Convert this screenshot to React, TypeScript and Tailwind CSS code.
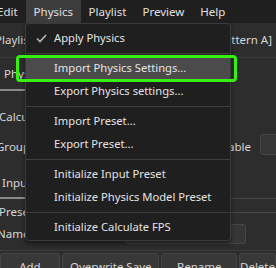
import React from 'react';

const MenuItem = ({ label, active = false, checked = false }: { label: string; active?: boolean; checked?: boolean }) => (
  <div className={`relative flex h-[23px] items-center pl-[28px] ${active ? 'bg-[#4b4b4b]' : ''}`}>
    {checked && (
      <svg className="absolute left-[10px] top-[7px]" width="11" height="9" viewBox="0 0 11 9" fill="none">
        <path d="M1 4.5 L4 7.5 L10 1" stroke="#b4b4b4" strokeWidth="1.6" />
      </svg>
    )}
    <span>{label}</span>
  </div>
);

const Separator = () => (
  <div className="flex h-[7px] items-center">
    <div className="h-px w-full bg-[#3e3e3e]" />
  </div>
);

export default function App() {
  return (
    <div className="relative h-[268px] w-[276px] overflow-hidden bg-[#2d2d2d] font-['Noto_Sans',sans-serif] text-[11.5px] text-[#d6d6d6]">
      {/* menu bar */}
      <div className="flex h-[23px] items-center bg-[#1f1f1f] text-[#e0e0e0]">
        <div className="-ml-[11px] flex h-full items-center px-2">Edit</div>
        <div className="flex h-full w-[55px] items-center bg-[#3c3c3c] px-2">Physics</div>
        <div className="flex h-full items-center px-2">Playlist</div>
        <div className="flex h-full items-center px-2">Preview</div>
        <div className="flex h-full items-center px-2">Help</div>
      </div>

      {/* toolbar */}
      <div className="flex h-[35px] items-center justify-between border-b border-[#3a3a3a] pr-[4px]">
        <span className="-ml-[5px]">Playlist</span>
        <span>[Physics Pattern A]</span>
      </div>

      {/* tab */}
      <div className="flex h-[33px] flex-col justify-between">
        <div className="flex flex-1 items-center pl-[4px]">Physics</div>
        <div className="h-[2px] w-[70px] bg-[#8a8a8a]" />
      </div>

      {/* settings */}
      <div className="mt-[13px] flex h-[26px] items-center">
        <span className="-ml-[1px]">Calculate FPS</span>
      </div>
      <div className="flex h-[34px] items-center justify-between">
        <span className="-ml-[4px]">Group</span>
        <div className="flex items-center gap-[9px]">
          <span>Enable</span>
          <div className="-mr-[6px] mb-[5px] h-[21px] w-[22px] rounded-[3px] border border-[#454545] bg-[#363636]" />
        </div>
      </div>
      <div className="flex h-[34px] items-center pl-[2px] pt-[3px]">Input Preset</div>
      <div className="relative h-px bg-[#484848]">
        <div className="absolute -top-px left-0 h-[2px] w-[70px] bg-[#8a8a8a]" />
      </div>

      {/* preset group */}
      <div className="flex h-[24px] items-center pt-[2px]">
        <span className="-ml-[1px]">Preset</span>
        <div className="ml-[4px] h-px flex-1 bg-[#484848]" />
      </div>
      <div className="flex h-[21px] items-center justify-between pr-[30px]">
        <span className="-ml-[3px]">Name</span>
        <div className="h-[20px] w-[120px] rounded-[3px] border border-[#454545] bg-[#363636]" />
      </div>
      <div className="mt-[6px] h-px bg-[#3c3c3c]" />

      {/* buttons */}
      <div className="mt-[2px] flex gap-[2px]">
        <div className="flex h-[24px] w-[65px] justify-center rounded-[3px] border border-[#464646] bg-[#383838] pt-[4px]">Add</div>
        <div className="flex h-[24px] w-[106px] justify-center rounded-[3px] border border-[#464646] bg-[#383838] pt-[4px]">Overwrite Save</div>
        <div className="flex h-[24px] w-[82px] justify-center rounded-[3px] border border-[#464646] bg-[#383838] pt-[4px]">Rename</div>
        <div className="flex h-[24px] flex-1 justify-center rounded-[3px] border border-[#464646] bg-[#383838] pt-[4px]">Delete</div>
      </div>

      {/* dropdown menu */}
      <div className="absolute left-[25px] top-[23px] w-[206px] rounded-[4px] border border-[#3b3b3b] bg-[#1f1f1f] pb-[1px] pt-[3px] text-[11.2px] text-[#e4e4e4] shadow-[0_3px_4px_rgba(0,0,0,0.45)]">
        <MenuItem label="Apply Physics" checked />
        <Separator />
        <MenuItem label="Import Physics Settings..." active />
        <MenuItem label="Export Physics settings..." />
        <Separator />
        <MenuItem label="Import Preset..." />
        <MenuItem label="Export Preset..." />
        <Separator />
        <MenuItem label="Initialize Input Preset" />
        <MenuItem label="Initialize Physics Model Preset" />
        <Separator />
        <MenuItem label="Initialize Calculate FPS" />
      </div>

      {/* highlight annotation */}
      <div className="absolute left-[16px] top-[55px] h-[27px] w-[221px] rounded-[4px] border-[3px] border-[#36f00f]" />
    </div>
  );
}
